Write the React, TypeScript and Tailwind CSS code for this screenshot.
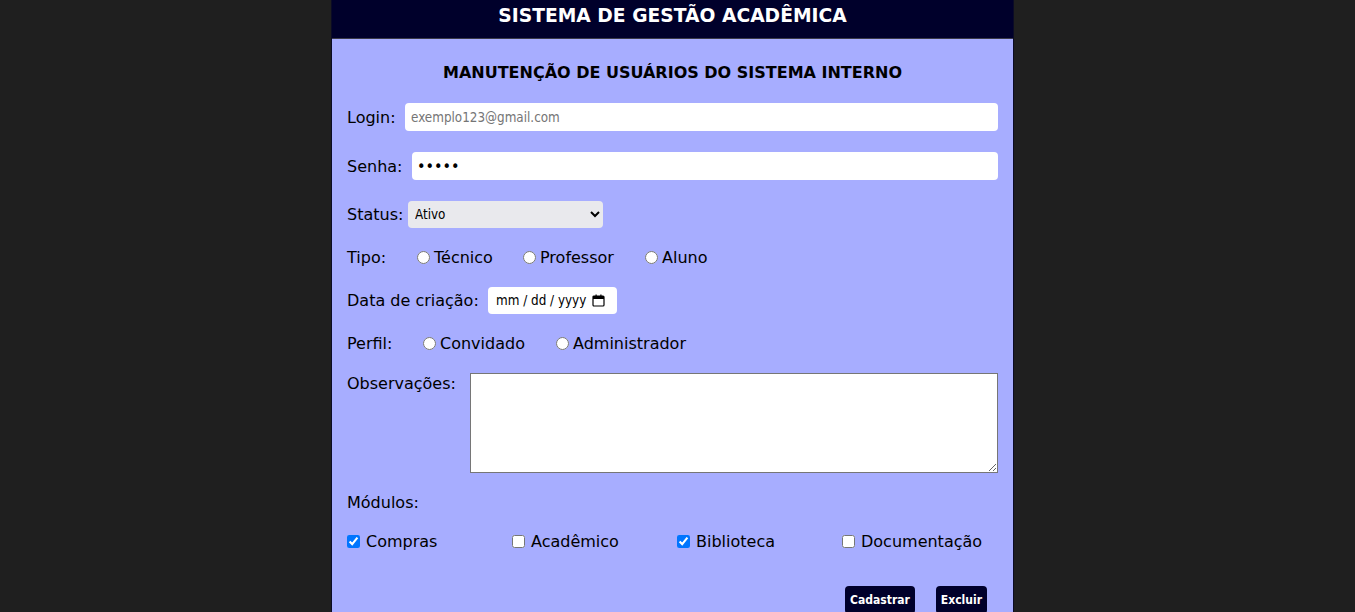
import { useState } from "react";

const tipos = [
  { label: "Técnico", w: "w-[106px]" },
  { label: "Professor", w: "w-[122px]" },
  { label: "Aluno", w: "w-[100px]" },
];

const perfis = [
  { label: "Convidado", w: "w-[133px]" },
  { label: "Administrador", w: "w-[160px]" },
];

const modulos = [
  { label: "Compras", checked: true },
  { label: "Acadêmico", checked: false },
  { label: "Biblioteca", checked: true },
  { label: "Documentação", checked: false },
];

const CalendarGlyph = () => (
  <svg width="13" height="13" viewBox="0 0 13 13" fill="none" className="shrink-0">
    <rect x="1" y="2" width="11" height="10" rx="1" stroke="#000" strokeWidth="1.2" />
    <rect x="1" y="2" width="11" height="3" fill="#000" />
    <rect x="3.5" y="0.5" width="1.2" height="2.5" fill="#000" />
    <rect x="8.3" y="0.5" width="1.2" height="2.5" fill="#000" />
  </svg>
);

const App = () => {
  const [checks, setChecks] = useState(modulos.map((m) => m.checked));

  return (
    <div className="min-h-screen bg-[#1f1f1f] pl-[331px] font-['DejaVu_Sans',sans-serif] text-base text-black">
      <div className="w-[683px] min-h-[640px] bg-[#a7adff] border-x border-[#0b0b26]">
        <header className="h-[39px] bg-[#00002b] border-b border-[#3a3a48] pt-[5px]">
          <h1 className="text-center text-[18.72px] leading-[22px] font-bold text-white">SISTEMA DE GESTÃO ACADÊMICA</h1>
        </header>

        <div className="px-[15px]">
          <h2 className="mt-[24px] text-center text-base leading-[20px] font-bold">MANUTENÇÃO DE USUÁRIOS DO SISTEMA INTERNO</h2>

          <div className="mt-[20px] flex items-center h-[28px]">
            <label className="w-[58px] shrink-0 pt-[1px]">Login:</label>
            <input
              type="text"
              placeholder="exemplo123@gmail.com"
              className="flex-1 h-[28px] rounded-[4px] bg-white px-[6px] font-['DejaVu_Sans_Condensed',sans-serif] text-[13.33px] placeholder:text-[#757575] outline-none"
            />
          </div>

          <div className="mt-[21px] flex items-center h-[28px]">
            <label className="w-[65px] shrink-0 pt-[1px]">Senha:</label>
            <input
              type="password"
              defaultValue="12345"
              className="flex-1 h-[28px] rounded-[4px] bg-white px-[5px] font-['DejaVu_Sans_Condensed',sans-serif] text-[16px] outline-none"
            />
          </div>

          <div className="mt-[21px] flex items-center h-[27px]">
            <label className="w-[61px] shrink-0">Status:</label>
            <select className="w-[195px] h-[27px] rounded-[4px] bg-[#e9e9ed] pl-[3px] font-['DejaVu_Sans_Condensed',sans-serif] text-[13.33px] outline-none">
              <option>Ativo</option>
              <option>Inativo</option>
            </select>
          </div>

          <div className="mt-[19px] flex items-center h-[20px]">
            <span className="w-[70px] shrink-0 pt-[1px]">Tipo:</span>
            {tipos.map((t) => (
              <label key={t.label} className={`${t.w} shrink-0 flex items-center gap-[4px] pt-[1px]`}>
                <input type="radio" name="tipo" className="w-[13px] h-[13px]" />
                <span>{t.label}</span>
              </label>
            ))}
          </div>

          <div className="mt-[20px] flex items-center h-[27px]">
            <label className="w-[141px] shrink-0">Data de criação:</label>
            <div className="w-[129px] h-[27px] rounded-[4px] bg-white pl-[8px] flex items-center gap-[6px] font-['DejaVu_Sans_Condensed',sans-serif] text-[13.33px]">
              <span>mm / dd / yyyy</span>
              <CalendarGlyph />
            </div>
          </div>

          <div className="mt-[19px] flex items-center h-[20px]">
            <span className="w-[76px] shrink-0 pt-[1px]">Perfil:</span>
            {perfis.map((p) => (
              <label key={p.label} className={`${p.w} shrink-0 flex items-center gap-[4px] pt-[1px]`}>
                <input type="radio" name="perfil" className="w-[13px] h-[13px]" />
                <span>{p.label}</span>
              </label>
            ))}
          </div>

          <div className="mt-[20px] flex items-start">
            <label className="w-[123px] shrink-0 -mt-[1px]">Observações:</label>
            <textarea className="flex-1 h-[100px] bg-white border border-[#767676] outline-none" />
          </div>

          <div className="mt-[19px] h-[20px] flex items-center pt-[1px]">Módulos:</div>

          <div className="mt-[19px] flex items-center h-[20px]">
            {modulos.map((m, i) => (
              <label key={m.label} className="w-[165px] shrink-0 flex items-center gap-[6px] pt-[1px]">
                <input
                  type="checkbox"
                  checked={checks[i]}
                  onChange={() => setChecks(checks.map((c, j) => (j === i ? !c : c)))}
                  className="w-[13px] h-[13px]"
                />
                <span>{m.label}</span>
              </label>
            ))}
          </div>

          <div className="mt-[35px] flex justify-end gap-[21px] pr-[11px] pb-[20px]">
            <button className="h-[28px] px-[5px] rounded-[4px] bg-[#00002b] text-white font-['DejaVu_Sans_Condensed',sans-serif] font-bold text-[12px]">Cadastrar</button>
            <button className="h-[28px] px-[5px] rounded-[4px] bg-[#00002b] text-white font-['DejaVu_Sans_Condensed',sans-serif] font-bold text-[12px]">Excluir</button>
          </div>
        </div>
      </div>
    </div>
  );
};

export default App;
